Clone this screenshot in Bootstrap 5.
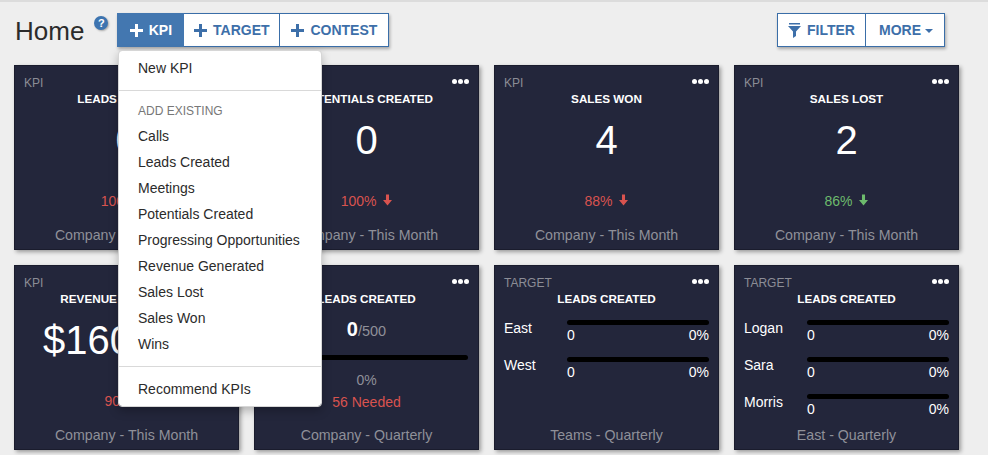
<!DOCTYPE html>
<html lang="en">
<head>
  <meta charset="UTF-8">
  <meta name="viewport" content="width=device-width, initial-scale=1">
  <title>Home</title>
  <link href="https://cdn.jsdelivr.net/npm/bootstrap@5.3.3/dist/css/bootstrap.min.css" rel="stylesheet">
  <style>
    html, body { height: 100%; }
    body { background: #eeeeee; border-top: 2px solid #dcdcdc; font-family: "Liberation Sans", Arial, sans-serif; overflow: hidden; color: #222; }
    .page-wrap { padding: 11px 14px 0; position: relative; }
    .head-bar { height: 52px; }
    .page-title { font-size: 26px; line-height: 1; font-weight: 400; margin: 5px 0 0 1px; color: #2b2b2b; }
    .help-dot { width: 14px; height: 14px; border-radius: 50%; background: #3d74b0; color: #fff; font-size: 11px; font-weight: 700; line-height: 14px; text-align: center; margin: 3px 0 0 10px; box-shadow: 1px 1px 2px rgba(0,0,0,.3); }
    .tool-group { box-shadow: 1px 2px 3px rgba(0,0,0,.3); height: 34px; }
    .left-tools { margin-left: 9px; }
    .tool-btn { background: #fff; color: #3d6fa9; border: 1px solid #3a6ea8; border-left-width: 0; border-radius: 0; font-size: 14px; font-weight: 700; padding: 1px 0 0; height: 34px; display: flex; align-items: center; justify-content: center; gap: 6px; flex: none; }
    .tool-btn:first-child { border-left-width: 1px; }
    .tool-btn.is-open, .tool-btn.is-open:hover { background: #4377b0; color: #fff; border-color: #4377b0; }
    .tool-btn:hover { background: #fff; color: #3d6fa9; border-color: #3a6ea8; }
    .w-kpi { width: 67px; }
    .w-target { width: 96px; }
    .w-contest { width: 109px; }
    .w-filter { width: 89px; }
    .w-more { width: 79px; padding-left: 2px; }
    .right-tools { margin-right: 29px; }
    .caret-down { width: 0; height: 0; border-left: 4px solid transparent; border-right: 4px solid transparent; border-top: 4px solid currentColor; margin-left: -2px; }
    .tile-grid { display: grid; grid-template-columns: repeat(4, 225px); grid-auto-rows: 185px; gap: 15px; }
    .tile { background: #23263b; border: 1px solid #1a1c2d; border-radius: 0; box-shadow: 2px 2px 4px rgba(0,0,0,.35); color: #fff; position: relative; text-align: center; white-space: nowrap; }
    .tile-kind { position: absolute; left: 9px; top: 10px; font-size: 12px; line-height: 14px; color: #8c8d96; }
    .tile-dots { position: absolute; right: 9px; top: 13px; display: flex; gap: 1px; }
    .tile-dots i { width: 5px; height: 5px; border-radius: 50%; background: #fff; display: block; }
    .tile-name { font-size: 11.7px; font-weight: 700; line-height: 14px; padding-top: 26px; }
    .tile-value { font-size: 40px; line-height: 46px; margin-top: 11px; display: flex; justify-content: center; }
    .tile-change { font-size: 14px; line-height: 16px; margin-top: 30px; }
    .tile-change svg { vertical-align: 0; margin-left: 3px; }
    .tile-foot { position: absolute; left: 0; right: 0; bottom: 6px; font-size: 14.2px; line-height: 16px; color: #8f9099; }
    .down-bad { color: #d9534f; }
    .down-good { color: #6dbb6d; }
    .goal-line { font-size: 20px; font-weight: 700; line-height: 22px; margin-top: 12px; }
    .goal-line span { font-size: 14.5px; font-weight: 400; color: #8f9099; }
    .goal-bar { height: 5px; border-radius: 3px; background: #000; margin: 13px 10px 0; }
    .goal-pct { font-size: 14px; line-height: 16px; color: #8f9099; margin-top: 12px; }
    .goal-need { font-size: 14px; line-height: 16px; color: #d9534f; margin-top: 6px; }
    .split-rows { padding: 14px 9px 0; text-align: left; }
    .split-row { display: flex; height: 37px; font-size: 14px; line-height: 16px; }
    .split-label { width: 63px; flex: none; }
    .split-track { flex: 1; }
    .split-track .bar-line { height: 5px; border-radius: 3px; background: #000; margin-bottom: 2px; }
    .kpi-menu { position: absolute; left: 118px; top: 48px; width: 204px; height: 357px; padding: 4px 0 0; margin: 0; border: 1px solid #d6d6d6; border-radius: 4px; box-shadow: 0 4px 10px rgba(0,0,0,.25); font-size: 14px; display: block; }
    .kpi-menu .dropdown-item { padding: 0 19px; line-height: 26px; height: 26px; color: #2b2b2b; }
    .kpi-menu .dropdown-divider { margin: 9px 0 0; border-color: #d9d9d9; opacity: 1; }
    .kpi-menu .dropdown-header { padding: 13px 19px 0; font-size: 12px; line-height: 14px; height: 32px; color: #777; }
    .kpi-menu .after-rule { margin-top: 9px; }
  </style>
</head>
<body>
  <div class="page-wrap">
    <div class="head-bar d-flex align-items-start">
      <h1 class="page-title">Home</h1>
      <div class="help-dot">?</div>
      <div class="d-flex tool-group left-tools">
        <button class="btn tool-btn is-open w-kpi">
          <svg width="13" height="13" viewBox="0 0 13 13"><path d="M5 0h3v5h5v3H8v5H5V8H0V5h5z" fill="currentColor"/></svg>KPI
        </button>
        <button class="btn tool-btn w-target">
          <svg width="13" height="13" viewBox="0 0 13 13"><path d="M5 0h3v5h5v3H8v5H5V8H0V5h5z" fill="currentColor"/></svg>TARGET
        </button>
        <button class="btn tool-btn w-contest">
          <svg width="13" height="13" viewBox="0 0 13 13"><path d="M5 0h3v5h5v3H8v5H5V8H0V5h5z" fill="currentColor"/></svg>CONTEST
        </button>
      </div>
      <div class="d-flex tool-group ms-auto right-tools">
        <button class="btn tool-btn w-filter">
          <svg width="13" height="15" viewBox="0 0 13 15"><path d="M1 0h11v1.400H1zM0 3h13L8 8.500V13l-3 2V8.500z" fill="currentColor"/></svg>FILTER
        </button>
        <button class="btn tool-btn w-more">MORE <span class="caret-down"></span></button>
      </div>
    </div>

    <div class="tile-grid" id="tiles"></div>

    <ul class="dropdown-menu kpi-menu" id="kpiMenu"></ul>
  </div>

  <script>
    const arrow = '<svg width="9" height="12" viewBox="0 0 10 12"><path d="M3.300 0h3.400v6H10l-5 6-5-6h3.300z" fill="currentColor"/></svg>';
    const dots = '<div class="tile-dots"><i></i><i></i><i></i></div>';

    const tiles = [
      { kind: "KPI", name: "LEADS CREATED", value: "0", change: "100%", tone: "down-bad", foot: "Company - This Month" },
      { kind: "KPI", name: "POTENTIALS CREATED", value: "0", change: "100%", tone: "down-bad", foot: "Company - This Month" },
      { kind: "KPI", name: "SALES WON", value: "4", change: "88%", tone: "down-bad", foot: "Company - This Month" },
      { kind: "KPI", name: "SALES LOST", value: "2", change: "86%", tone: "down-good", foot: "Company - This Month" },
      { kind: "KPI", name: "REVENUE GENERATED", value: "$160,000", change: "90%", tone: "down-bad", foot: "Company - This Month" },
      { kind: "KPI", name: "LEADS CREATED", goal: true, foot: "Company - Quarterly" },
      { kind: "TARGET", name: "LEADS CREATED", rows: ["East", "West"], foot: "Teams - Quarterly" },
      { kind: "TARGET", name: "LEADS CREATED", rows: ["Logan", "Sara", "Morris"], foot: "East - Quarterly" }
    ];

    document.getElementById("tiles").innerHTML = tiles.map(t => {
      let body = "";
      if (t.goal) {
        body = '<div class="goal-line">0<span>/500</span></div><div class="goal-bar"></div>' +
               '<div class="goal-pct">0%</div><div class="goal-need">56 Needed</div>';
      } else if (t.rows) {
        body = '<div class="split-rows">' + t.rows.map(r =>
          '<div class="split-row"><div class="split-label">' + r + '</div><div class="split-track">' +
          '<div class="bar-line"></div><div class="d-flex justify-content-between"><span>0</span><span>0%</span></div></div></div>'
        ).join("") + '</div>';
      } else {
        body = '<div class="tile-value">' + t.value + '</div><div class="tile-change ' + t.tone + '">' + t.change + ' ' + arrow + '</div>';
      }
      return '<div class="card tile"><div class="tile-kind">' + t.kind + '</div>' + dots +
             '<div class="tile-name">' + t.name + '</div>' + body +
             '<div class="tile-foot">' + t.foot + '</div></div>';
    }).join("");

    const existing = ["Calls", "Leads Created", "Meetings", "Potentials Created", "Progressing Opportunities", "Revenue Generated", "Sales Lost", "Sales Won", "Wins"];
    document.getElementById("kpiMenu").innerHTML =
      '<li><a class="dropdown-item" href="#">New KPI</a></li><li><hr class="dropdown-divider"></li>' +
      '<li><div class="dropdown-header">ADD EXISTING</div></li>' +
      existing.map(e => '<li><a class="dropdown-item" href="#">' + e + '</a></li>').join("") +
      '<li><hr class="dropdown-divider"></li><li><a class="dropdown-item after-rule" href="#">Recommend KPIs</a></li>';
  </script>
  <script src="https://cdn.jsdelivr.net/npm/bootstrap@5.3.3/dist/js/bootstrap.bundle.min.js"></script>
</body>
</html>
